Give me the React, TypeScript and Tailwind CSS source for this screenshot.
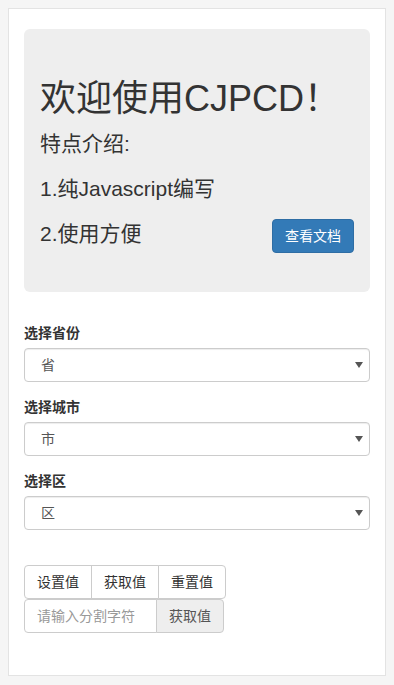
import { useState } from "react"

const font = "font-['Liberation_Sans','Noto_Sans_CJK_SC',sans-serif]"

function SelectField({ label, value }: { label: string; value: string }) {
  const [v, setV] = useState(value)
  return (
    <div className="mb-[15px]">
      <label className="mb-[5px] block text-[14px] font-bold leading-[20px] text-[#333]">{label}</label>
      <div className="relative">
        <select
          value={v}
          onChange={(e) => setV(e.target.value)}
          className="block h-[34px] w-full appearance-none rounded-[4px] border border-[#ccc] bg-white pl-[16px] pr-6 text-[14px] text-[#555] shadow-[inset_0_1px_1px_rgba(0,0,0,0.075)] outline-none"
        >
          <option value={value}>{value}</option>
        </select>
        {/* dropdown arrow */}
        <span className="pointer-events-none absolute right-[7px] top-1/2 h-0 w-0 -translate-y-1/2 border-x-[4px] border-t-[6px] border-x-transparent border-t-[#555]" />
      </div>
    </div>
  )
}

export default function App() {
  return (
    <div className={`${font} min-h-screen bg-[#f5f5f5] p-2 text-[#333]`}>
      <div className="min-h-[668px] border border-[#e3e3e3] bg-white px-[15px] pb-10 pt-5">
        {/* Jumbotron */}
        <div className="rounded-[6px] bg-[#eee] px-4 pb-[39px] pt-[50px]">
          <h1 className="mb-[10px] text-[36px] font-normal leading-[40px]">欢迎使用CJPCD！</h1>
          <p className="mb-[15px] text-[21px] leading-[30px]">特点介绍:</p>
          <p className="mb-[15px] text-[21px] leading-[30px]">1.纯Javascript编写</p>
          <div className="flex items-center justify-between">
            <p className="-mt-[4px] text-[21px] leading-[30px]">2.使用方便</p>
            <button className="h-[34px] rounded-[4px] border border-[#2e6da4] bg-[#337ab7] px-3 text-[14px] text-white">
              查看文档
            </button>
          </div>
        </div>

        <div className="mt-[31px]">
          <SelectField label="选择省份" value="省" />
          <SelectField label="选择城市" value="市" />
          <SelectField label="选择区" value="区" />
        </div>

        <div className="mt-[35px] flex">
          <button className="h-[34px] rounded-l-[4px] border border-[#ccc] bg-white px-3 text-[14px] text-[#333]">设置值</button>
          <button className="-ml-px h-[34px] border border-[#ccc] bg-white px-3 text-[14px] text-[#333]">获取值</button>
          <button className="-ml-px h-[34px] rounded-r-[4px] border border-[#ccc] bg-white px-3 text-[14px] text-[#333]">重置值</button>
        </div>
        <div className="flex">
          <input
            placeholder="请输入分割字符"
            className="h-[34px] w-[133px] rounded-l-[4px] border border-[#ccc] bg-white px-3 text-[14px] text-[#555] outline-none placeholder:text-[#999]"
          />
          <button className="-ml-px h-[34px] w-[68px] rounded-r-[4px] border border-[#ccc] bg-[#eee] text-[14px] text-[#555]">获取值</button>
        </div>
      </div>
    </div>
  )
}
